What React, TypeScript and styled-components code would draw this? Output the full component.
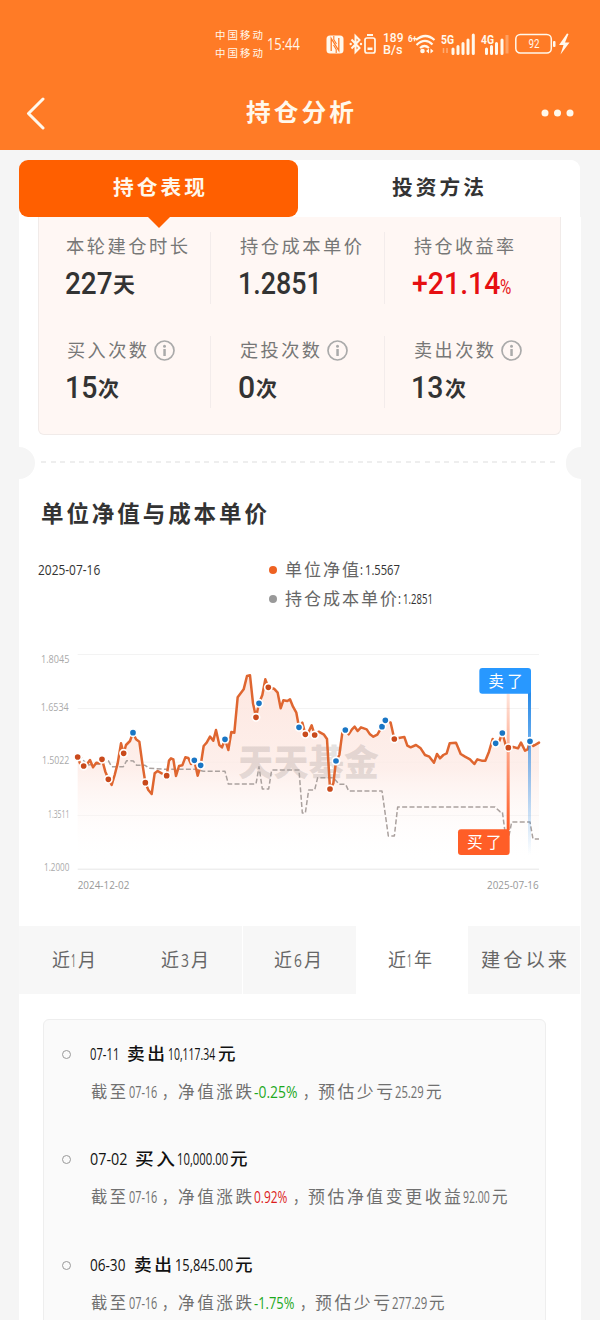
import React, { useLayoutEffect, useRef } from 'react';
import styled, { createGlobalStyle } from 'styled-components';

const GlobalStyle = createGlobalStyle`
  *, *::before, *::after { box-sizing: border-box; }
  body {
    margin: 0;
    background: #f5f5f5;
    font-family: Roboto, "Noto Sans CJK SC", sans-serif;
    color: #333;
  }
`;

const hand = '"Open Sans", "Noto Sans CJK SC", sans-serif';

/* Text squeezed or stretched to an exact width */
const FitBox = styled.span<{ $w: number; $gap?: number }>`
  display: inline-block;
  flex: none;
  width: ${p => p.$w}px;
  margin-left: ${p => p.$gap ?? 0}px;
  white-space: nowrap;
`;
const FitInner = styled.span<{ $ls: number }>`
  display: inline-block;
  letter-spacing: ${p => p.$ls}px;
  transform-origin: left center;
`;
function Fit({ w, gap, ls = 0, children, className }: { w: number; gap?: number; ls?: number; children: React.ReactNode; className?: string }) {
  const ref = useRef<HTMLSpanElement>(null);
  useLayoutEffect(() => {
    const el = ref.current;
    if (el) el.style.transform = `scaleX(${w / (el.offsetWidth - ls)})`;
  }, [w, ls]);
  return (
    <FitBox $w={w} $gap={gap} className={className}>
      <FitInner ref={ref} $ls={ls}>{children}</FitInner>
    </FitBox>
  );
}

const Page = styled.div`
  width: 600px;
  height: 1320px;
  overflow: hidden;
  background: #f5f5f5;
`;

/* ---------- header ---------- */
const Header = styled.header`
  height: 150px;
  background: #ff7b26;
  color: #fff8ec;
`;
const StatusBar = styled.div`
  height: 88px;
  padding-left: 215px;
  display: flex;
  align-items: center;
`;
const Carriers = styled.div`
  display: flex;
  flex-direction: column;
  font: 400 10px/18px ${hand};
`;
const Clock = styled(Fit)`
  font: 400 16px/20px ${hand};
`;
const StatusIcon = styled.svg<{ $gap: number }>`
  flex: none;
  display: block;
  margin-left: ${p => p.$gap}px;
  overflow: visible;
`;
const Speed = styled.div`
  width: 22px;
  margin-left: 6px;
  display: flex;
  flex-direction: column;
  font: 500 12px/12px Roboto, sans-serif;
`;
const NavBar = styled.div`
  height: 50px;
  padding: 0 26px;
  display: flex;
  align-items: center;
  justify-content: space-between;
`;
const NavTitle = styled(Fit)`
  font: 700 24px/36px ${hand};
  margin-top: -2px;
`;

/* ---------- top tabs ---------- */
const TopTabs = styled.nav`
  margin: 9.5px 20px 0 19px;
  height: 57.5px;
  display: flex;
  background: #fff;
  border-radius: 10px 10px 0 0;
`;
const TopTab = styled.div<{ $active?: boolean }>`
  flex: 1;
  position: relative;
  display: flex;
  align-items: center;
  justify-content: center;
  padding: 0 ${p => (p.$active ? 0 : 3)}px 3px 0;
  border-radius: 9px;
  font: 700 20.5px/30px ${hand};
  color: ${p => (p.$active ? '#fff8ec' : '#333')};
  background: ${p => (p.$active ? '#ff5f00' : '#fff')};
`;
const Pointer = styled.i`
  position: absolute;
  top: 100%;
  left: 50%;
  margin-left: -11px;
  border: 11px solid transparent;
  border-top-color: #ff5f00;
  border-bottom: 0;
`;

/* ---------- card ---------- */
const Card = styled.main`
  margin: 0 19px;
  height: 1103px;
  background: #fff;
`;
const Stats = styled.section`
  margin: 0 20px 0 19px;
  height: 217.5px;
  padding-top: 15px;
  display: grid;
  grid-template-columns: 172px 174px 1fr;
  grid-template-rows: 72px 72px;
  row-gap: 32px;
  background: #fff7f4;
  border: 1px solid #f1ebe9;
  border-top: 0;
  border-radius: 0 0 6px 6px;
`;
const Stat = styled.div`
  padding-left: 26px;
  border-right: 1px solid #f3eceb;
  &:nth-child(3n) { border-right: 0; }
`;
const StatLabel = styled.div`
  height: 28px;
  display: flex;
  align-items: center;
  font: 400 18.5px/28px ${hand};
  color: #777;
`;
const InfoIcon = styled.svg`
  margin-left: 7px;
  display: block;
`;
const StatValue = styled.div<{ $red?: boolean }>`
  display: flex;
  align-items: baseline;
  height: 46px;
  font: 500 32px/46px Roboto, sans-serif;
  color: ${p => (p.$red ? '#e60f12' : '#333')};
`;
const Unit = styled(Fit)`
  font: 700 21px/42px ${hand};
  position: relative;
  top: -2px;
`;
const PercentUnit = styled(Fit)`
  font: 400 21px/46px Roboto, sans-serif;
`;

const Perforation = styled.div`
  margin-top: 12.5px;
  height: 32px;
  display: flex;
  align-items: center;
  overflow: hidden;
`;
const Notch = styled.i<{ $right?: boolean }>`
  width: 15.5px;
  height: 32px;
  background: #f5f5f5;
  border-radius: ${p => (p.$right ? '16px 0 0 16px' : '0 16px 16px 0')};
`;
const DashLine = styled.div`
  flex: 1;
  height: 2px;
  margin: 0 10px 2px 6px;
  background: repeating-linear-gradient(90deg, #eee 0 5px, transparent 5px 9.6px);
`;

const Heading = styled.h2`
  margin: 16px 0 0 22px;
  font: 700 23px/36px ${hand};
  color: #333;
`;
const LegendRow = styled.div`
  margin: 24px 0 0 19px;
  display: flex;
  font: 400 15px/29px ${hand};
  color: #333;
`;
const LegendDate = styled.div`
  width: 231px;
`;
const LegendItem = styled.div`
  display: flex;
  align-items: center;
  height: 29px;
`;
const Dot = styled.i<{ $c: string }>`
  width: 8px;
  height: 8px;
  border-radius: 50%;
  background: ${p => p.$c};
`;
const LegendName = styled(Fit)`
  font-size: 17.5px;
  color: #666;
`;
const Chart = styled.svg`
  display: block;
  margin: 27px 0 0 1px;
  font-family: ${hand};
`;

/* ---------- range tabs ---------- */
const Ranges = styled.div`
  margin: 26px 1px 0 0;
  height: 68px;
  display: grid;
  grid-template-columns: repeat(5, 1fr);
`;
const Range = styled.div<{ $active?: boolean; $line?: boolean }>`
  display: flex;
  align-items: center;
  justify-content: center;
  padding-right: 3px;
  background: ${p => (p.$active ? '#fff' : '#f7f7f7')};
  border-right: ${p => (p.$line ? '1px solid #fff' : '0')};
  font: 400 19px/30px ${hand};
  color: #666;
`;
const LastRange = styled(Range)`
  padding-right: 0;
`;

/* ---------- transactions ---------- */
const Records = styled.ul`
  margin: 25px 35px 0 24px;
  padding: 15.5px 0 0;
  height: 320px;
  list-style: none;
  background: #fafafa;
  border: 1px solid #eee;
  border-radius: 6px;
`;
const RecordItem = styled.li`
  height: 105.5px;
  display: flex;
  padding-left: 18px;
`;
const Ring = styled.i`
  flex: none;
  width: 9px;
  height: 9px;
  margin: 14px 19px 0 0;
  border: 1px solid #999;
  border-radius: 50%;
`;
const Title = styled.div`
  display: flex;
  align-items: baseline;
  height: 34px;
  font: 500 17.5px/34px ${hand};
  color: #111;
`;
const Detail = styled.div`
  display: flex;
  align-items: baseline;
  margin-top: 5px;
  font: 400 16.5px/34px ${hand};
  color: #707070;
`;
const Digits = styled(Fit)<{ $c?: string }>`
  font-size: 15.5px;
  font-weight: 400;
  color: ${p => p.$c ?? 'inherit'};
`;

/* [text, gap before, width, colour] */
type Seg = [string, number, number, string?];
const records: { title: Seg[]; detail: Seg[] }[] = [
  {
    title: [['07-11', 0, 29], ['卖出', 8, 38], ['10,117.34', 3, 47], ['元', 3, 18]],
    detail: [['截至', 1, 35], ['07-16', 3, 28], ['，', 5, 14], ['净值涨跌', 2, 74], ['-0.25%', 2, 43, '#1da81d'], ['，', 6, 14], ['预估少亏', 1, 75], ['25.29', 2, 29], ['元', 2, 16]],
  },
  {
    title: [['07-02', 0, 37], ['买入', 8, 40], ['10,000.00', 2, 51], ['元', 2, 18]],
    detail: [['截至', 1, 35], ['07-16', 3, 28], ['，', 5, 14], ['净值涨跌', 2, 74], ['0.92%', 2, 33, '#dc1c1c'], ['，', 6, 14], ['预估净值变更收益', 1, 153], ['92.00', 2, 27], ['元', 2, 16]],
  },
  {
    title: [['06-30', 0, 35], ['卖出', 9, 38], ['15,845.00', 3, 58], ['元', 2, 18]],
    detail: [['截至', 1, 35], ['07-16', 3, 28], ['，', 5, 14], ['净值涨跌', 2, 74], ['-1.75%', 2, 40, '#1da81d'], ['，', 6, 14], ['预估少亏', 1, 75], ['277.29', 2, 35], ['元', 2, 16]],
  },
];
const Segs = ({ items }: { items: Seg[] }) => (
  <>
    {items.map(([t, gap, w, c], i) =>
      /\d/.test(t)
        ? <Digits key={i} w={w} gap={gap} $c={c}>{t}</Digits>
        : <Fit key={i} w={w} gap={gap} ls={t.length > 1 ? 2.5 : 0}>{t}</Fit>
    )}
  </>
);

/* ---------- chart data ---------- */
const nav = '173,351 180,370 191,376 200,374 210,360 219,382 229,368 238,370 246,358 256,395 265,416 275,435 284,405 293,370 303,310 311,340 318,315 330,303 339,278 348,298 358,305 367,370 376,428 385,450 395,462 404,400 413,393 425,400 440,407 447,362 453,355 460,358 468,408 477,378 487,376 496,352 505,354 513,372 523,361 533,407 542,376 551,318 560,308 570,290 580,302 588,270 598,315 606,322 615,298 625,330 634,276 643,278 653,172 662,160 671,148 681,108 690,106 699,190 708,232 717,190 727,165 736,118 745,142 762,146 773,158 782,205 790,181 802,183 810,178 819,200 829,218 837,262 847,248 856,283 866,275 875,256 884,285 896,275 912,284 921,297 930,447 940,430 948,363 958,345 967,278 976,270 986,283 996,268 1004,260 1013,273 1023,262 1040,268 1050,283 1060,290 1072,284 1086,260 1096,241 1112,248 1123,297 1140,293 1153,291 1162,317 1172,322 1188,315 1202,325 1215,345 1228,350 1242,368 1251,342 1260,355 1270,345 1280,340 1289,310 1308,308 1315,325 1322,342 1335,350 1350,358 1363,372 1372,358 1385,362 1396,362 1407,335 1418,297 1427,310 1438,303 1447,279 1457,315 1465,323 1480,321 1494,325 1503,308 1515,332 1523,328 1530,304 1540,318 1557,308';
const cost = '173,351 182,350 191,362 200,375 240,372 250,360 265,362 275,380 310,380 320,362 340,363 350,376 375,376 388,385 440,388 530,388 550,394 615,394 625,432 708,432 717,380 727,447 746,447 755,390 837,390 847,519 856,519 866,450 884,450 893,413 940,413 958,433 977,433 986,453 1086,453 1105,588 1123,588 1133,501 1425,501 1440,515 1447,515 1457,590 1466,592 1475,546 1530,546 1539,597 1557,597';
const buys = [[173, 351], [191, 378], [246, 358], [265, 418], [311, 340], [376, 428], [440, 407], [708, 232], [745, 142], [856, 283], [884, 285], [930, 447], [1123, 297], [1465, 323]];
const sells = [[339, 278], [523, 361], [542, 376], [615, 298], [717, 190], [837, 262], [948, 363], [976, 270], [1086, 260], [1096, 241], [1427, 310], [1447, 279], [1530, 304]];
const axis: [string, number, number, number, number][] = [
  ['1.8045', 63, 85, 43, 68],
  ['1.6534', 62, 84, 205, 212],
  ['1.5022', 66, 82, 366, 372],
  ['1.3511', 84, 64, 526, 533],
  ['1.2000', 72, 76, 687, 693],
];

function NavChart() {
  return (
    <Chart width="561" height="260" viewBox="0 0 1683 780">
      <defs>
        <linearGradient id="area" gradientUnits="userSpaceOnUse" x1="0" y1="100" x2="0" y2="670">
          <stop offset="0" stopColor="#fde3db" stopOpacity="0.85" />
          <stop offset="0.5" stopColor="#fdebe6" stopOpacity="0.8" />
          <stop offset="1" stopColor="#fff" stopOpacity="0" />
        </linearGradient>
        <linearGradient id="buyPole" x1="0" y1="1" x2="0" y2="0">
          <stop offset="0" stopColor="#ff5a23" />
          <stop offset="1" stopColor="#ff5a23" stopOpacity="0.15" />
        </linearGradient>
        <linearGradient id="sellPole" x1="0" y1="0" x2="0" y2="1">
          <stop offset="0" stopColor="#2387e6" />
          <stop offset="1" stopColor="#2387e6" stopOpacity="0" />
        </linearGradient>
      </defs>
      {axis.map(([t, x, w, y, base]) => (
        <g key={t}>
          <rect x="173" y={y - 1} width="1384" height={3} fill={y > 600 ? '#e6e6e6' : '#f3f3f3'} />
          <text x={x} y={base} fontSize="35" fill="#aaa" textLength={w} lengthAdjust="spacingAndGlyphs">{t}</text>
        </g>
      ))}
      <polygon points={`173,687 ${nav} 1557,687`} fill="url(#area)" />
      <text x="655" y="408" fontSize="108" fontWeight="900" fill="#8a7f7c" fillOpacity="0.22" textLength="422" lengthAdjust="spacingAndGlyphs">天天基金</text>
      <polyline points={cost} fill="none" stroke="#aaa19e" strokeWidth="4.5" strokeDasharray="15 7" strokeLinejoin="round" />
      <polyline points={nav} fill="none" stroke="#df6630" strokeWidth="7.5" strokeLinejoin="round" strokeLinecap="round" />

      <rect x="1460" y="160" width="9" height="410" fill="url(#buyPole)" />
      <rect x="1524" y="150" width="9" height="495" fill="url(#sellPole)" />
      {buys.map(([x, y]) => <circle key={x} cx={x} cy={y} r="11" fill="#c94a1c" stroke="#fff" strokeWidth="5" />)}
      {sells.map(([x, y]) => <circle key={x} cx={x} cy={y} r="11" fill="#1976c5" stroke="#fff" strokeWidth="5" />)}
      <rect x="1378" y="84" width="155" height="77" rx="9" fill="#2898ff" />
      <text x="1405" y="140" fontSize="47" fill="#fff" textLength="104">卖了</text>
      <rect x="1314" y="568" width="155" height="77" rx="9" fill="#ff5e27" />
      <text x="1341" y="624" fontSize="47" fill="#fff" textLength="104">买了</text>

      <text x="173" y="748" fontSize="34" fill="#999" textLength="155" lengthAdjust="spacingAndGlyphs">2024-12-02</text>
      <text x="1401" y="748" fontSize="34" fill="#999" textLength="155" lengthAdjust="spacingAndGlyphs">2025-07-16</text>
    </Chart>
  );
}

const Info = () => (
  <InfoIcon width="21" height="21" viewBox="0 0 21 21">
    <circle cx="10.5" cy="10.5" r="9.5" fill="none" stroke="#aaa" strokeWidth="1.7" />
    <circle cx="10.5" cy="6.3" r="1.5" fill="#aaa" />
    <rect x="9.3" y="9" width="2.5" height="7" rx="0.5" fill="#aaa" />
  </InfoIcon>
);

const c = '#fff8ec';
function Status() {
  return (
    <StatusBar>
      <Carriers>
        <Fit w={48} ls={2}>中国移动</Fit>
        <Fit w={48} ls={2}>中国移动</Fit>
      </Carriers>
      <Clock w={33} gap={4}>15:44</Clock>
      <StatusIcon $gap={26} width="18" height="19" viewBox="0 0 18 19">
        <rect x="0.5" y="0.5" width="17" height="18" rx="3.5" fill={c} />
        <path d="M5.200 16V3.500L12.800 15.500V3" fill="none" stroke="#ff7b26" strokeWidth="1.300" />
        <path d="M7.800 1v3.500L10.500 9M10.200 18v-3.500L7.500 10" fill="none" stroke="#ff7b26" strokeWidth="1.100" />
      </StatusIcon>
      <StatusIcon $gap={5} width="14" height="20" viewBox="0 0 14 20">
        <path d="M2.500 5.500l8 8.500-4 4V2l4 4-8 8.500" fill="none" stroke={c} strokeWidth="2" />
        <circle cx="1.700" cy="10" r="1.200" fill={c} /><circle cx="12" cy="10" r="1.200" fill={c} />
      </StatusIcon>
      <StatusIcon $gap={1} width="12" height="20" viewBox="0 0 12 20">
        <path d="M3 1h6" stroke={c} strokeWidth="2" />
        <rect x="1" y="4" width="10" height="15" rx="2" fill="none" stroke={c} strokeWidth="1.700" />
        <rect x="3.500" y="13.500" width="5" height="2.500" fill={c} />
      </StatusIcon>
      <Speed><Fit w={20} gap={1}>189</Fit><Fit w={19} gap={1}>B/s</Fit></Speed>
      <StatusIcon $gap={4} width="27" height="20" viewBox="0 0 27 20">
        <text x="0" y="8" fontSize="9.500" fontWeight="700" fill={c} textLength="9" lengthAdjust="spacingAndGlyphs">6+</text>
        <path d="M8 6Q17.500 -2 26.500 6M8.500 11Q17 3 24.500 10.500M12 14Q16.500 10 21 14" fill="none" stroke={c} strokeWidth="2.200" />
        <circle cx="14.500" cy="17" r="2.300" fill={c} />
        <path d="M18 17l3-2.500v5zM25.500 17l-3-2.500v5z" fill={c} />
      </StatusIcon>
      <StatusIcon $gap={6} width="34" height="20" viewBox="0 0 34 20">
        <text x="0" y="9.500" fontSize="12" fontWeight="700" fill={c} textLength="13" lengthAdjust="spacingAndGlyphs">5G</text>
        <path d="M2.500 14v5M6 14v5" stroke={c} strokeWidth="1.500" opacity="0.4" />
        <path d="M12 15v4.500M17 12.500v7M22 9.500v10M27 6v13.500M32.300 1v18.500" stroke={c} strokeWidth="3" strokeLinecap="round" />
      </StatusIcon>
      <StatusIcon $gap={6} width="28" height="20" viewBox="0 0 28 20">
        <text x="0" y="9.500" fontSize="12" fontWeight="700" fill={c} textLength="13" lengthAdjust="spacingAndGlyphs">4G</text>
        <path d="M5.500 15v4.500M10.500 12.500v7M15.500 9.500v10M21 6v13.500" stroke={c} strokeWidth="3" strokeLinecap="round" />
        <path d="M26 1v18.500" stroke={c} strokeWidth="3" opacity="0.3" />
      </StatusIcon>
      <StatusIcon $gap={6} width="56" height="22" viewBox="0 0 56 22">
        <rect x="0.800" y="1.500" width="35.500" height="18.500" rx="4.500" fill="none" stroke={c} strokeWidth="1.500" />
        <rect x="38" y="8" width="2.500" height="6" rx="1" fill={c} />
        <path d="M52 0.500L44 12h4.500L45.500 21.500 54.500 9.500H50L53.500 1z" fill={c} />
        <text x="13.500" y="15" fontSize="12.500" fill={c} textLength="11" lengthAdjust="spacingAndGlyphs">92</text>
      </StatusIcon>
    </StatusBar>
  );
}

export default function App() {
  return (
    <Page>
      <GlobalStyle />
      <Header>
        <Status />
        <NavBar>
          <svg width="33" height="34" viewBox="0 0 33 34">
            <path d="M17 3L2.500 17.500 17 32" fill="none" stroke={c} strokeWidth="3" strokeLinecap="round" strokeLinejoin="round" />
          </svg>
          <NavTitle w={108} ls={3}>持仓分析</NavTitle>
          <svg width="33" height="8" viewBox="0 0 33 8">
            <circle cx="4" cy="4" r="3.500" fill={c} /><circle cx="16.500" cy="4" r="3.500" fill={c} /><circle cx="29" cy="4" r="3.500" fill={c} />
          </svg>
        </NavBar>
      </Header>

      <TopTabs>
        <TopTab $active><Fit w={92} ls={3}>持仓表现</Fit><Pointer /></TopTab>
        <TopTab><Fit w={92} ls={3}>投资方法</Fit></TopTab>
      </TopTabs>

      <Card>
        <Stats>
          <Stat>
            <StatLabel><Fit w={122} gap={1} ls={2.5}>本轮建仓时长</Fit></StatLabel>
            <StatValue><Fit w={48}>227</Fit><Unit w={22}>天</Unit></StatValue>
          </Stat>
          <Stat>
            <StatLabel><Fit w={122} gap={3} ls={2.5}>持仓成本单价</Fit></StatLabel>
            <StatValue><Fit w={84} gap={1}>1.2851</Fit></StatValue>
          </Stat>
          <Stat>
            <StatLabel><Fit w={100} gap={3} ls={2.5}>持仓收益率</Fit></StatLabel>
            <StatValue $red><Fit w={88} gap={1}>+21.14</Fit><PercentUnit w={11}>%</PercentUnit></StatValue>
          </Stat>
          <Stat>
            <StatLabel><Fit w={80} gap={2} ls={2.5}>买入次数</Fit><Info /></StatLabel>
            <StatValue><Fit w={32}>15</Fit><Unit w={21} gap={1}>次</Unit></StatValue>
          </Stat>
          <Stat>
            <StatLabel><Fit w={80} gap={3} ls={2.5}>定投次数</Fit><Info /></StatLabel>
            <StatValue><Fit w={17} gap={1}>0</Fit><Unit w={21} gap={1}>次</Unit></StatValue>
          </Stat>
          <Stat>
            <StatLabel><Fit w={80} gap={3} ls={2.5}>卖出次数</Fit><Info /></StatLabel>
            <StatValue><Fit w={32}>13</Fit><Unit w={21} gap={2}>次</Unit></StatValue>
          </Stat>
        </Stats>

        <Perforation><Notch /><DashLine /><Notch $right /></Perforation>

        <Heading><Fit w={226} ls={3}>单位净值与成本单价</Fit></Heading>
        <LegendRow>
          <LegendDate><Fit w={62}>2025-07-16</Fit></LegendDate>
          <div>
            <LegendItem><Dot $c="#ee6222" /><LegendName w={74} gap={8} ls={2}>单位净值</LegendName><Fit w={3} gap={1}>:</Fit><Fit w={35} gap={2}>1.5567</Fit></LegendItem>
            <LegendItem><Dot $c="#999" /><LegendName w={112} gap={8} ls={2}>持仓成本单价</LegendName><Fit w={3} gap={1}>:</Fit><Fit w={30} gap={2}>1.2851</Fit></LegendItem>
          </div>
        </LegendRow>

        <NavChart />

        <Ranges>
          <Range><Fit w={18}>近</Fit><Fit w={5} gap={1}>1</Fit><Fit w={18} gap={2}>月</Fit></Range>
          <Range $line><Fit w={18}>近</Fit><Fit w={8} gap={2}>3</Fit><Fit w={18} gap={2}>月</Fit></Range>
          <Range><Fit w={18}>近</Fit><Fit w={8} gap={2}>6</Fit><Fit w={18} gap={2}>月</Fit></Range>
          <Range $active><Fit w={18}>近</Fit><Fit w={5} gap={1}>1</Fit><Fit w={18} gap={2}>年</Fit></Range>
          <LastRange><Fit w={86} ls={3}>建仓以来</Fit></LastRange>
        </Ranges>

        <Records>
          {records.map((r, i) => (
            <RecordItem key={i}>
              <Ring />
              <div>
                <Title><Segs items={r.title} /></Title>
                <Detail><Segs items={r.detail} /></Detail>
              </div>
            </RecordItem>
          ))}
        </Records>
      </Card>
    </Page>
  );
}
